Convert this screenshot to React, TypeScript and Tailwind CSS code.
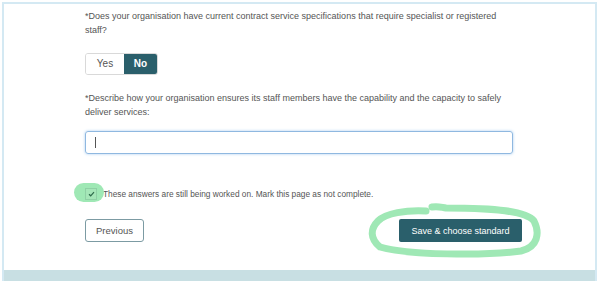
import React from "react";

export default function App() {
  return (
    <div className="relative w-[600px] h-[284px] bg-white overflow-hidden" style={{ fontFamily: '"Liberation Sans", Arial, sans-serif' }}>
      <div className="ml-[2px] mt-[2px] w-[595px] h-[279px] border-l-[2px] border-t-[2px] border-r-[2px] border-[#d4e9f3] flex flex-col">
        <div className="flex-1 pl-[81px] pr-[80px] text-[9px] leading-[14px] text-[#555]">
          <p className="mt-[5px]">*Does your organisation have current contract service specifications that require specialist or registered staff?</p>
          <div className="mt-[16px] flex w-[73px] h-[22px] rounded-[3px] border border-[#d9d9d9] overflow-hidden text-[10px]">
            <div className="w-[38px] flex items-center justify-center text-[#555] bg-white">Yes</div>
            <div className="flex-1 flex items-center justify-center bg-[#2a5f6b] text-white font-bold">No</div>
          </div>
          <p className="mt-[16px]">*Describe how your organisation ensures its staff members have the capability and the capacity to safely deliver services:</p>
          <div className="mt-[12px] w-[428px] h-[23px] rounded-[3px] border border-[#8fb8e0] shadow-[0_0_3px_#a9cdf0] flex items-center pl-[9px]">
            <div className="w-px h-[11px] bg-[#555]" />
          </div>
          <div className="mt-[33px] flex items-center">
            <div className="relative w-[12px] h-[12px] flex items-center justify-center">
              <div className="absolute left-[-11px] top-[-5px] w-[30px] h-[19px] rounded-full bg-[#9fe8b5]" />
              <div className="relative w-[12px] h-[12px] border border-[#8fd0a5] bg-[#a5e6b8] flex items-center justify-center">
                <svg width="7" height="6" viewBox="0 0 7 6"><path d="M1 3.2 L2.7 4.8 L6 1.2" stroke="#2d6a4a" strokeWidth="1.2" fill="none" /></svg>
              </div>
            </div>
            <span className="ml-[6px] text-[8.3px] text-[#555]">These answers are still being worked on. Mark this page as not complete.</span>
          </div>
          <div className="mt-[18px] flex justify-between items-center">
            <button className="w-[59px] h-[23px] rounded-[3px] border border-[#7c9ba3] text-[9.5px] text-[#555] bg-white">Previous</button>
            <button className="mr-[-7px] w-[123px] h-[23px] rounded-[2px] bg-[#2a5f6b] text-[9px] text-white">Save &amp; choose standard</button>
          </div>
        </div>
        <div className="h-[11px] bg-[#c8dfe3]" />
      </div>
      <svg className="absolute left-[366px] top-[203px] pointer-events-none" width="178" height="56" viewBox="0 0 178 56">
        <path d="M60 8 C40 7 20 10 12 18 C4 26 4 36 14 44 C40 52 120 53 155 48 C172 44 174 30 168 18 C160 8 130 5 80 5 C74 4 72 3 66 4" stroke="#9fe8b5" strokeWidth="7" fill="none" strokeLinecap="round" />
      </svg>
    </div>
  );
}
